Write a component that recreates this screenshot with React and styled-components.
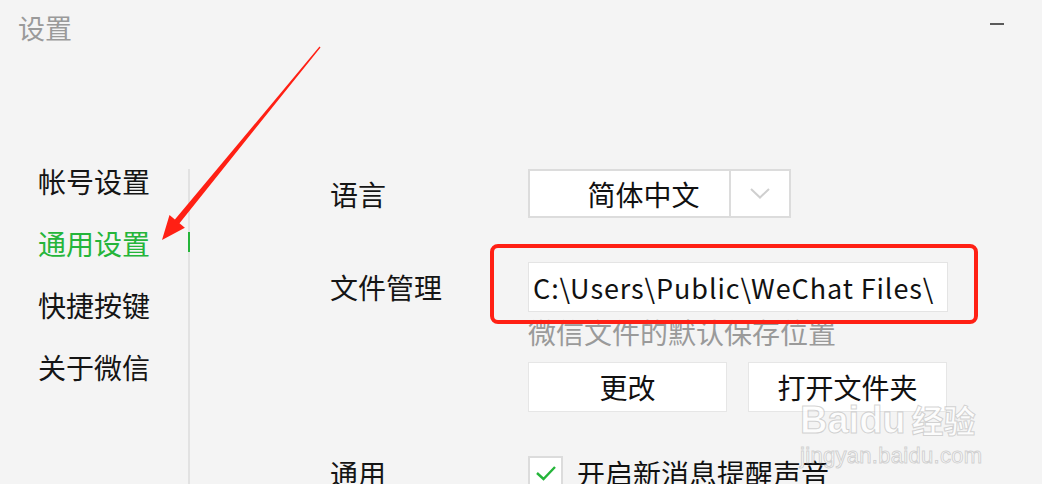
import React from 'react';
import styled, { createGlobalStyle } from 'styled-components';

const GlobalStyle = createGlobalStyle`
  html, body {
    margin: 0;
    padding: 0;
    background: #f4f4f4;
  }
  body {
    font-family: "Noto Sans CJK SC", "Noto Sans", sans-serif;
    color: #111;
  }
`;

const FONT = '"Noto Sans CJK SC", "Noto Sans", sans-serif';
const GREEN = '#25b53a';
const RED = '#ff2014';

const Window = styled.div`
  position: relative;
  width: 1042px;
  height: 484px;
  overflow: hidden;
  background: #f4f4f4;
  font-family: ${FONT};
`;

const Header = styled.div`
  display: flex;
  justify-content: space-between;
  align-items: flex-start;
  height: 151px;
  padding: 9px 38px 0 18px;
  box-sizing: border-box;
`;

const Title = styled.div`
  font-size: 27px;
  line-height: 38px;
  color: #9a9a9a;
`;

const MinButton = styled.div`
  width: 14px;
  height: 2px;
  margin-top: 14px;
  background: #5a5a5a;
`;

const Body = styled.div`
  display: flex;
  height: 333px;
`;

const Nav = styled.div`
  display: flex;
  flex-direction: column;
  width: 188px;
  padding-left: 38px;
  box-sizing: border-box;
`;

const NavItem = styled.div`
  height: 62px;
  line-height: 61px;
  font-size: 28px;
  color: ${(p) => (p.$active ? GREEN : '#151515')};
  white-space: nowrap;
`;

const Divider = styled.div`
  display: flex;
  flex-direction: column;
  width: 2px;
  margin-top: 18px;
  padding-top: 63px;
  background: #e2e2e2;
`;

const Indicator = styled.div`
  width: 2px;
  height: 20px;
  background: ${GREEN};
`;

const Content = styled.div`
  display: flex;
  flex-direction: column;
  padding: 18px 0 0 140px;
`;

const Row = styled.div`
  display: flex;
  align-items: ${(p) => p.$align || 'center'};
  margin-top: ${(p) => p.$top || 0}px;
`;

const Label = styled.div`
  width: 198px;
  font-size: 28px;
  line-height: ${(p) => p.$lh || 'normal'};
  color: #151515;
  white-space: nowrap;
`;

const Field = styled.div`
  display: flex;
  flex-direction: column;
`;

const Select = styled.div`
  display: flex;
  width: 263px;
  height: 49px;
  box-sizing: border-box;
  border: 2px solid #dcdcdc;
  background: #fff;
`;

const SelectValue = styled.div`
  flex: 1;
  display: flex;
  align-items: center;
  justify-content: center;
  padding-left: 28px;
  font-size: 28px;
  color: #111;
  border-right: 2px solid #dcdcdc;
`;

const SelectArrow = styled.div`
  width: 58px;
  display: flex;
  align-items: center;
  justify-content: center;
`;

const PathBox = styled.div`
  position: relative;
  width: 420px;
  height: 50px;
  box-sizing: border-box;
  border: 1px solid #e4e4e4;
  background: #fff;
  display: flex;
  align-items: center;
  padding-left: 4px;
  font-size: 27px;
  letter-spacing: 0.9px;
  color: #111;
  white-space: nowrap;
`;

const Highlight = styled.div`
  position: absolute;
  left: -39px;
  top: -19px;
  width: 488px;
  height: 80px;
  box-sizing: border-box;
  border: 4px solid ${RED};
  border-radius: 8px;
`;

const Hint = styled.div`
  margin-top: 2px;
  font-size: 28px;
  line-height: 36px;
  color: #9a9a9a;
  white-space: nowrap;
`;

const Buttons = styled.div`
  display: flex;
  gap: 21px;
  margin-top: 12px;
`;

const Button = styled.div`
  width: 199px;
  height: 50px;
  box-sizing: border-box;
  border: 1px solid #e6e6e6;
  background: #fff;
  display: flex;
  align-items: center;
  justify-content: center;
  font-size: 28px;
  color: #111;
`;

const Check = styled.div`
  display: flex;
  align-items: center;
  gap: 14px;
  font-size: 28px;
  color: #111;
  white-space: nowrap;
`;

const Box = styled.div`
  width: 35px;
  height: 35px;
  box-sizing: border-box;
  border: 2px solid #dcdcdc;
  background: #fff;
  display: flex;
  align-items: center;
  justify-content: center;
`;

const ArrowLayer = styled.svg`
  position: absolute;
  left: 0;
  top: 0;
  pointer-events: none;
`;

const Watermark = styled.div`
  position: absolute;
  left: 800px;
  top: 396px;
  display: flex;
  flex-direction: column;
  color: rgba(255, 255, 255, 0.75);
  -webkit-text-stroke: 1px rgba(170, 170, 170, 0.5);
  pointer-events: none;
`;

const MarkBrand = styled.div`
  display: flex;
  align-items: baseline;
  gap: 6px;
  font-family: "Liberation Sans", Arial, sans-serif;
  font-size: 38px;
  font-weight: bold;
  line-height: 46px;
`;

const MarkCn = styled.span`
  font-family: ${FONT};
  font-size: 32px;
`;

const MarkUrl = styled.div`
  font-family: "Liberation Sans", Arial, sans-serif;
  font-size: 22px;
  line-height: 26px;
  letter-spacing: 0.3px;
`;

const navItems = ['帐号设置', '通用设置', '快捷按键', '关于微信'];

// tapered red annotation arrow, tail (320,47) -> tip (162,240)
const Arrow = () => {
  const tail = [320, 47];
  const tip = [162, 240];
  const dx = tip[0] - tail[0];
  const dy = tip[1] - tail[1];
  const len = Math.hypot(dx, dy);
  const u = [dx / len, dy / len];
  const n = [u[1], -u[0]];
  const headLen = 24;
  const headHalf = 10;
  const base = [tip[0] - u[0] * headLen, tip[1] - u[1] * headLen];
  const p = (c, k) => `${(c[0] + n[0] * k).toFixed(1)},${(c[1] + n[1] * k).toFixed(1)}`;
  const points = [
    p(tail, 0.6),
    p(base, 3),
    p(base, headHalf),
    `${tip[0]},${tip[1]}`,
    p(base, -headHalf),
    p(base, -3),
    p(tail, -0.6),
  ].join(' ');
  return (
    <ArrowLayer width="1042" height="484" viewBox="0 0 1042 484">
      <polygon points={points} fill={RED} />
    </ArrowLayer>
  );
};

export default function App() {
  return (
    <Window>
      <GlobalStyle />
      <Header>
        <Title>设置</Title>
        <MinButton />
      </Header>
      <Body>
        <Nav>
          {navItems.map((item) => (
            <NavItem key={item} $active={item === '通用设置'}>{item}</NavItem>
          ))}
        </Nav>
        <Divider>
          <Indicator />
        </Divider>
        <Content>
          <Row>
            <Label>语言</Label>
            <Select>
              <SelectValue>简体中文</SelectValue>
              <SelectArrow>
                <svg width="20" height="11" viewBox="0 0 20 11">
                  <polyline points="1,1 10,9.5 19,1" fill="none" stroke="#cfcfcf" strokeWidth="2" />
                </svg>
              </SelectArrow>
            </Select>
          </Row>
          <Row $top={44} $align="flex-start">
            <Label $lh="50px">文件管理</Label>
            <Field>
              <PathBox>
                C:\Users\Public\WeChat Files\
                <Highlight />
              </PathBox>
              <Hint>微信文件的默认保存位置</Hint>
              <Buttons>
                <Button>更改</Button>
                <Button>打开文件夹</Button>
              </Buttons>
            </Field>
          </Row>
          <Row $top={41}>
            <Label>通用</Label>
            <Check>
              <Box>
                <svg width="22" height="16" viewBox="0 0 22 16">
                  <polyline points="2,8 8.5,14 20,2" fill="none" stroke={GREEN} strokeWidth="2.4" />
                </svg>
              </Box>
              开启新消息提醒声音
            </Check>
          </Row>
        </Content>
      </Body>
      <Arrow />
      <Watermark>
        <MarkBrand>
          <span>Baidu</span>
          <MarkCn>经验</MarkCn>
        </MarkBrand>
        <MarkUrl>jingyan.baidu.com</MarkUrl>
      </Watermark>
    </Window>
  );
}
